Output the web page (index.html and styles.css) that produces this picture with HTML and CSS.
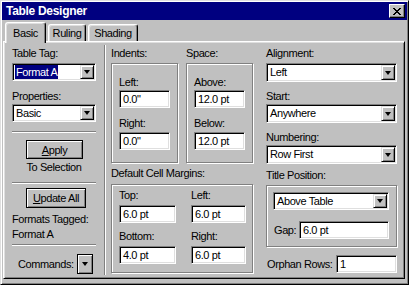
FILE: index.html
```html
<!DOCTYPE html>
<html>
	<head>
		<meta charset="utf-8">
		<title>Table Designer</title>
		<link rel="stylesheet" href="styles.css">
	</head>
	<body>
		<div class="dialog">
			<div class="titlebar">
				<span class="title">Table Designer</span>
				<span class="close">
					<svg width="8" height="7" viewBox="0 0 8 7" shape-rendering="crispEdges"><path d="M0 0h2v1h-2z M6 0h2v1h-2z M1 1h2v1h-2z M5 1h2v1h-2z M2 2h4v1h-4z M3 3h2v1h-2z M2 4h4v1h-4z M1 5h2v1h-2z M5 5h2v1h-2z M0 6h2v1h-2z M6 6h2v1h-2z" fill="#000"/></svg>
				</span>
			</div>
			<div class="tabs">
				<div class="tab active t-basic">Basic</div>
				<div class="tab t-ruling">Ruling</div>
				<div class="tab t-shading">Shading</div>
			</div>
			<div class="page">
				<!-- left column -->
				<div class="col-left">
					<div class="lbl">Table Tag:</div>
					<div class="combo mt3"><span class="val"><span class="sel">Format A</span></span><span class="arrow"><i class="tri"></i></span></div>
					<div class="lbl mt9">Properties:</div>
					<div class="combo mt1"><span class="val">Basic</span><span class="arrow"><i class="tri"></i></span></div>
					<div class="sep mt9"></div>
					<div class="pbtn apply mt7"><span><u>A</u>pply</span></div>
					<div class="lbl center mt2">To Selection</div>
					<div class="sep mt8"></div>
					<div class="pbtn update mt4"><span><u>U</u>pdate All</span></div>
					<div class="lbl tall mt4">Formats Tagged:</div>
					<div class="lbl tall">Format A</div>
					<div class="sep mt2"></div>
					<div class="cmd-row mt8">
						<span class="lbl">Commands:</span>
						<span class="cmd-btn"><i class="tri"></i></span>
					</div>
				</div>

				<div class="vsep"></div>

				<!-- middle column -->
				<div class="col-mid">
					<div class="grp-row">
						<div class="grp">
							<div class="lbl">Indents:</div>
							<div class="box small mt3">
								<div class="lbl">Left:</div>
								<div class="field mt1">0.0"</div>
								<div class="lbl mt9">Right:</div>
								<div class="field mt2">0.0"</div>
							</div>
						</div>
						<div class="grp">
							<div class="lbl">Space:</div>
							<div class="box small mt3">
								<div class="lbl">Above:</div>
								<div class="field mt1">12.0 pt</div>
								<div class="lbl mt9">Below:</div>
								<div class="field mt2">12.0 pt</div>
							</div>
						</div>
					</div>
					<div class="lbl mt4">Default Cell Margins:</div>
					<div class="box margins mt4">
						<div><div class="lbl">Top:</div><div class="field mt3">6.0 pt</div></div>
						<div><div class="lbl">Left:</div><div class="field mt3">6.0 pt</div></div>
						<div><div class="lbl">Bottom:</div><div class="field mt3">4.0 pt</div></div>
						<div><div class="lbl">Right:</div><div class="field mt3">6.0 pt</div></div>
					</div>
				</div>

				<!-- right column -->
				<div class="col-right">
					<div class="lbl">Alignment:</div>
					<div class="combo big mt3"><span class="val">Left</span><span class="arrow"><i class="tri"></i></span></div>
					<div class="lbl mt8">Start:</div>
					<div class="combo big mt1"><span class="val">Anywhere</span><span class="arrow"><i class="tri"></i></span></div>
					<div class="lbl mt8">Numbering:</div>
					<div class="combo big mt1"><span class="val">Row First</span><span class="arrow"><i class="tri"></i></span></div>
					<div class="lbl mt5">Title Position:</div>
					<div class="box title-pos mt3">
						<div class="combo"><span class="val">Above Table</span><span class="arrow"><i class="tri"></i></span></div>
						<div class="row gap-row">
							<span class="lbl">Gap:</span>
							<div class="field">6.0 pt</div>
						</div>
					</div>
					<div class="row orphan mt8">
						<span class="lbl">Orphan Rows:</span>
						<div class="field">1</div>
					</div>
				</div>
			</div>
		</div>
	</body>
</html>
```
FILE: styles.css
```css
*{
	margin: 0;
	padding: 0;
	box-sizing: border-box;
}

body{
	font-family: "Liberation Sans", Arial, sans-serif;
	font-size: 11px;
	letter-spacing: -0.4px;
	color: #000;
	background: #c0c0c0;
}

.dialog{
	width: 409px;
	height: 285px;
	background: #c0c0c0;
	border: 1px solid;
	border-color: #dfdfdf #000 #000 #dfdfdf;
	box-shadow: inset 1px 1px 0 #fff, inset -1px -1px 0 #808080;
	padding: 1px;
}

/* title bar */
.titlebar{
	height: 18px;
	background: #000080;
	color: #fff;
	display: flex;
	align-items: center;
	justify-content: space-between;
	padding: 0 2px 0 4px;
}
.title{
	font-weight: bold;
	font-size: 12px;
	letter-spacing: -0.3px;
}
.close{
	width: 16px;
	height: 14px;
	background: #c0c0c0;
	border: 1px solid;
	border-color: #fff #000 #000 #fff;
	box-shadow: inset -1px -1px 0 #808080;
	display: flex;
	align-items: center;
	justify-content: center;
}

/* tabs */
.tabs{
	display: flex;
	align-items: flex-end;
	height: 21px;
	padding-left: 3px;
}
.tab{
	height: 17px;
	margin-left: 2px;
	background: #c0c0c0;
	border: 1px solid;
	border-bottom: none;
	border-color: #fff #000 #000 #fff;
	border-radius: 3px 3px 0 0;
	box-shadow: inset -1px 0 0 #808080, inset 1px 1px 0 #dfdfdf;
	display: flex;
	align-items: center;
	justify-content: center;
}
.tab.active{
	height: 21px;
	margin-left: 0;
	margin-bottom: -2px;
	position: relative;
	z-index: 1;
}
.t-basic{ width: 41px; }
.t-ruling{ width: 38px; }
.t-shading{ width: 50px; }

/* tab page */
.page{
	display: flex;
	width: 402px;
	height: 238px;
	margin-left: 1px;
	border: 1px solid;
	border-color: #fff #000 #000 #fff;
	box-shadow: inset 1px 1px 0 #dfdfdf, inset -1px -1px 0 #808080;
	padding: 5px 0 0 8px;
}

.col-left{
	width: 84px;
	display: flex;
	flex-direction: column;
}
.vsep{
	width: 2px;
	border-left: 1px solid #808080;
	border-right: 1px solid #fff;
	margin: -2px 5px 3px 8px;
}
.col-mid{
	width: 142px;
}
.col-right{
	width: 131px;
	margin-left: 13px;
}

.lbl{
	height: 13px;
	line-height: 13px;
	white-space: nowrap;
}
.lbl.tall{
	height: 15px;
	line-height: 15px;
}
.center{ text-align: center; }

.mt1{ margin-top: 1px; }
.mt2{ margin-top: 2px; }
.mt3{ margin-top: 3px; }
.mt4{ margin-top: 4px; }
.mt5{ margin-top: 5px; }
.mt7{ margin-top: 7px; }
.mt8{ margin-top: 8px; }
.mt9{ margin-top: 9px; }

/* combo boxes and text fields */
.combo,.field{
	background: #fff;
	border: 1px solid;
	border-color: #808080 #fff #fff #808080;
	box-shadow: inset 1px 1px 0 #000, inset -1px -1px 0 #dfdfdf;
	height: 18px;
}
.combo{
	display: flex;
	padding: 1px;
}
.combo.big{ height: 19px; }
.combo .val{
	flex: 1;
	line-height: 14px;
	padding-left: 2px;
	white-space: nowrap;
	overflow: hidden;
}
.combo .sel{
	display: inline-block;
	background: #000080;
	color: #fff;
	padding: 0 1px;
	margin-left: -1px;
}
.arrow,.cmd-btn{
	width: 14px;
	background: #c0c0c0;
	border: 1px solid;
	border-color: #dfdfdf #000 #000 #dfdfdf;
	box-shadow: inset 1px 1px 0 #fff, inset -1px -1px 0 #808080;
	display: flex;
	align-items: center;
	justify-content: center;
}
.tri{
	width: 0;
	height: 0;
	border-style: solid;
	border-width: 4px 3.5px 0 3.5px;
	border-color: #000 transparent transparent transparent;
}
.field{
	padding: 0 3px;
	line-height: 16px;
	white-space: nowrap;
}

/* push buttons */
.pbtn{
	height: 19px;
	width: 57px;
	margin-left: 14px;
	border: 1px solid #000;
	box-shadow: inset 1px 1px 0 #fff, inset -1px -1px 0 #808080;
	display: flex;
	align-items: center;
	justify-content: center;
}
.pbtn.update{
	height: 20px;
	width: 60px;
}

.sep{
	height: 2px;
	border-top: 1px solid #808080;
	border-bottom: 1px solid #fff;
}

.cmd-row{
	display: flex;
	align-items: center;
	height: 20px;
	padding-left: 6px;
}
.cmd-btn{
	width: 16px;
	height: 20px;
	margin-left: auto;
	margin-right: 3px;
	border-color: #000;
}

/* group boxes */
.grp-row{
	display: flex;
	gap: 8px;
}
.grp{
	width: 67px;
}
.box{
	border: 1px solid #808080;
	box-shadow: inset 1px 1px 0 #fff, 1px 1px 0 #fff;
}
.box.small{
	height: 100px;
	padding: 12px 0 0 7px;
}
.box.small .field{
	width: 51px;
}
.box.margins{
	height: 89px;
	padding: 4px 0 0 7px;
	display: grid;
	grid-template-columns: 57px 55px;
	column-gap: 15px;
	row-gap: 7px;
	align-content: start;
}
.box.title-pos{
	height: 62px;
	padding: 6px 0 0 6px;
}
.title-pos .combo{
	width: 116px;
}

.row{
	display: flex;
	align-items: center;
	justify-content: space-between;
}
.gap-row{
	width: 116px;
	margin-top: 11px;
}
.gap-row .lbl{
	padding-left: 1px;
}
.gap-row .field{
	width: 90px;
}
.orphan .lbl{
	padding-left: 1px;
}
.orphan .field{
	width: 61px;
}
```
